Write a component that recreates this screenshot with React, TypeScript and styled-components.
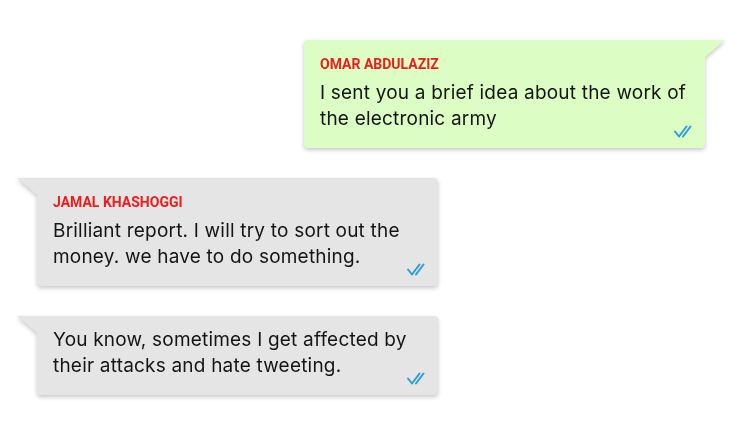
import React from "react";
import styled, {createGlobalStyle} from "styled-components";

const GlobalStyle = createGlobalStyle`
  html, body {
    margin: 0;
    padding: 0;
    background: #ffffff;
  }
  body {
    width: 747px;
    height: 446px;
    overflow: hidden;
    font-family: Inter, "Liberation Sans", sans-serif;
  }
`;

const Thread = styled.div`
  display: flex;
  flex-direction: column;
  gap: 30px;
  padding: 40px 42px 0 37px;
`;

interface BubbleProps {
  outgoing?: boolean;
}
const Bubble = styled.div<BubbleProps>`
  position: relative;
  width: 401px;
  box-sizing: border-box;
  align-self: ${props => (props.outgoing ? "flex-end" : "flex-start")};
  background-color: ${props => (props.outgoing ? "#dcfdc3" : "#e5e5e5")};
  border-radius: ${props => (props.outgoing ? "4px 0 4px 4px" : "0 4px 4px 4px")};
  padding: 11px 16px 16px 16px;
  filter: drop-shadow(0 2px 2px rgba(0, 0, 0, 0.22));
  &::before {
    content: "";
    position: absolute;
    top: 0;
    width: 0;
    height: 0;
    border-top: 17px solid ${props => (props.outgoing ? "#dcfdc3" : "#e5e5e5")};
    ${props =>
      props.outgoing
        ? "right: -20px; border-right: 20px solid transparent;"
        : "left: -20px; border-left: 20px solid transparent;"}
  }
`;

const Sender = styled.div`
  font-family: Roboto, "Liberation Sans", sans-serif;
  font-weight: 700;
  font-size: 14px;
  line-height: 20px;
  color: #f11b1b;
  text-transform: uppercase;
  margin: 3px 0 6px 0;
`;

const Text = styled.div`
  font-size: 19px;
  line-height: 26px;
  letter-spacing: 0.2px;
  color: #151515;
`;

const Ticks = styled.span`
  position: absolute;
  right: 12px;
  bottom: 10px;
  display: flex;
`;

const DoubleCheck = () => (
  <svg width="19" height="13" viewBox="0 0 19 13" fill="none">
    <path d="M1 6.5 L5 11.5 L12.5 1.5" stroke="#2b9fd9" strokeWidth="2" strokeLinecap="round" strokeLinejoin="round" />
    <path d="M9 11.5 L16.5 1.5" stroke="#2b9fd9" strokeWidth="2" strokeLinecap="round" />
  </svg>
);

const messages = [
  {
    id: 1,
    outgoing: true,
    sender: "Omar Abdulaziz",
    text: "I sent you a brief idea about the work of the electronic army"
  },
  {
    id: 2,
    outgoing: false,
    sender: "Jamal Khashoggi",
    text: "Brilliant report. I will try to sort out the money. we have to do something."
  },
  {
    id: 3,
    outgoing: false,
    sender: "",
    text: "You know, sometimes I get affected by their attacks and hate tweeting."
  }
];

const App = () => {
  return (
    <>
      <GlobalStyle />
      <Thread>
        {messages.map(m => (
          <Bubble key={m.id} outgoing={m.outgoing}>
            {m.sender && <Sender>{m.sender}</Sender>}
            <Text>{m.text}</Text>
            <Ticks>
              <DoubleCheck />
            </Ticks>
          </Bubble>
        ))}
      </Thread>
    </>
  );
};

export default App;
